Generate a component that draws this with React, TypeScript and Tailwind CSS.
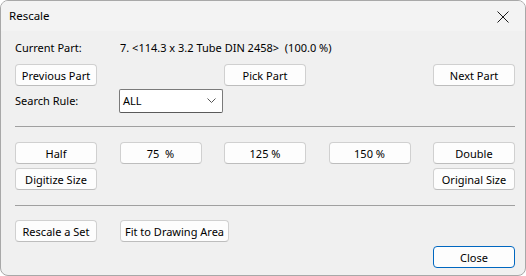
import React from "react";

const font = { fontFamily: '"Segoe UI", "Noto Sans", sans-serif' };

const Btn = ({
  label,
  className = "",
  primary = false,
}: {
  label: string;
  className?: string;
  primary?: boolean;
}) => (
  <button
    className={`h-[22px] rounded-[4px] bg-[#fdfdfd] text-[11px] leading-none text-black flex items-center justify-center whitespace-pre ${
      primary
        ? "border border-[#0067c0]"
        : "border border-[#d0d0d0] border-b-[#bdbdbd]"
    } ${className}`}
  >
    {label}
  </button>
);

const Sep = ({ className = "" }: { className?: string }) => (
  <div className={`h-px bg-[#a0a0a0] ${className}`} />
);

export default function App() {
  return (
    <div
      className="w-[526px] h-[276px] bg-[#f0f0f0] border border-[#a8a8a8] rounded-[8px] overflow-hidden text-black"
      style={font}
    >
      {/* Title bar */}
      <div className="h-[30px] bg-[#f3f3f3] flex items-center justify-between pl-[8px] pr-[16px]">
        <span className="text-[11.5px]">Rescale</span>
        <svg width="12" height="12" viewBox="0 0 12 12" className="mt-[1px]">
          <path d="M0.5 0.5 L11.5 11.5 M11.5 0.5 L0.5 11.5" stroke="#1a1a1a" strokeWidth="1" />
        </svg>
      </div>

      <div className="pl-[14px] pr-[10px]">
        {/* Current part */}
        <div className="mt-[9px] h-[16px] flex items-center text-[11px]">
          <span className="w-[105px]">Current Part:</span>
          <span className="whitespace-pre">{"7. <114.3 x 3.2 Tube DIN 2458>  (100.0 %)"}</span>
        </div>

        {/* Navigation */}
        <div className="mt-[8px] flex justify-between">
          <Btn label="Previous Part" className="w-[82px]" />
          <Btn label="Pick Part" className="w-[82px]" />
          <Btn label="Next Part" className="w-[82px]" />
        </div>

        {/* Search rule */}
        <div className="mt-[3px] flex items-center text-[11px]">
          <span className="w-[104px]">Search Rule:</span>
          <div className="w-[104px] h-[24px] bg-white border border-[#7a7a7a] border-b-[#5a5a5a] rounded-[2px] flex items-center justify-between pl-[3px] pr-[6px]">
            <span>ALL</span>
            <svg width="9" height="6" viewBox="0 0 9 6">
              <path d="M0.5 0.5 L4.5 4.5 L8.5 0.5" fill="none" stroke="#555" strokeWidth="1" />
            </svg>
          </div>
        </div>

        <Sep className="mt-[13px]" />

        {/* Scale buttons */}
        <div className="mt-[15px] flex justify-between">
          <Btn label="Half" className="w-[82px]" />
          <Btn label="75  %" className="w-[82px]" />
          <Btn label="125 %" className="w-[82px]" />
          <Btn label="150 %" className="w-[82px]" />
          <Btn label="Double" className="w-[82px]" />
        </div>
        <div className="mt-[4px] flex justify-between">
          <Btn label="Digitize Size" className="w-[82px]" />
          <Btn label="Original Size" className="w-[82px]" />
        </div>

        <Sep className="mt-[15px]" />

        <div className="mt-[14px] flex gap-[23px]">
          <Btn label="Rescale a Set" className="w-[82px]" />
          <Btn label="Fit to Drawing Area" className="w-[109px]" />
        </div>

        <div className="mt-[4px] flex justify-end">
          <Btn label="Close" primary className="w-[82px]" />
        </div>
      </div>
    </div>
  );
}
